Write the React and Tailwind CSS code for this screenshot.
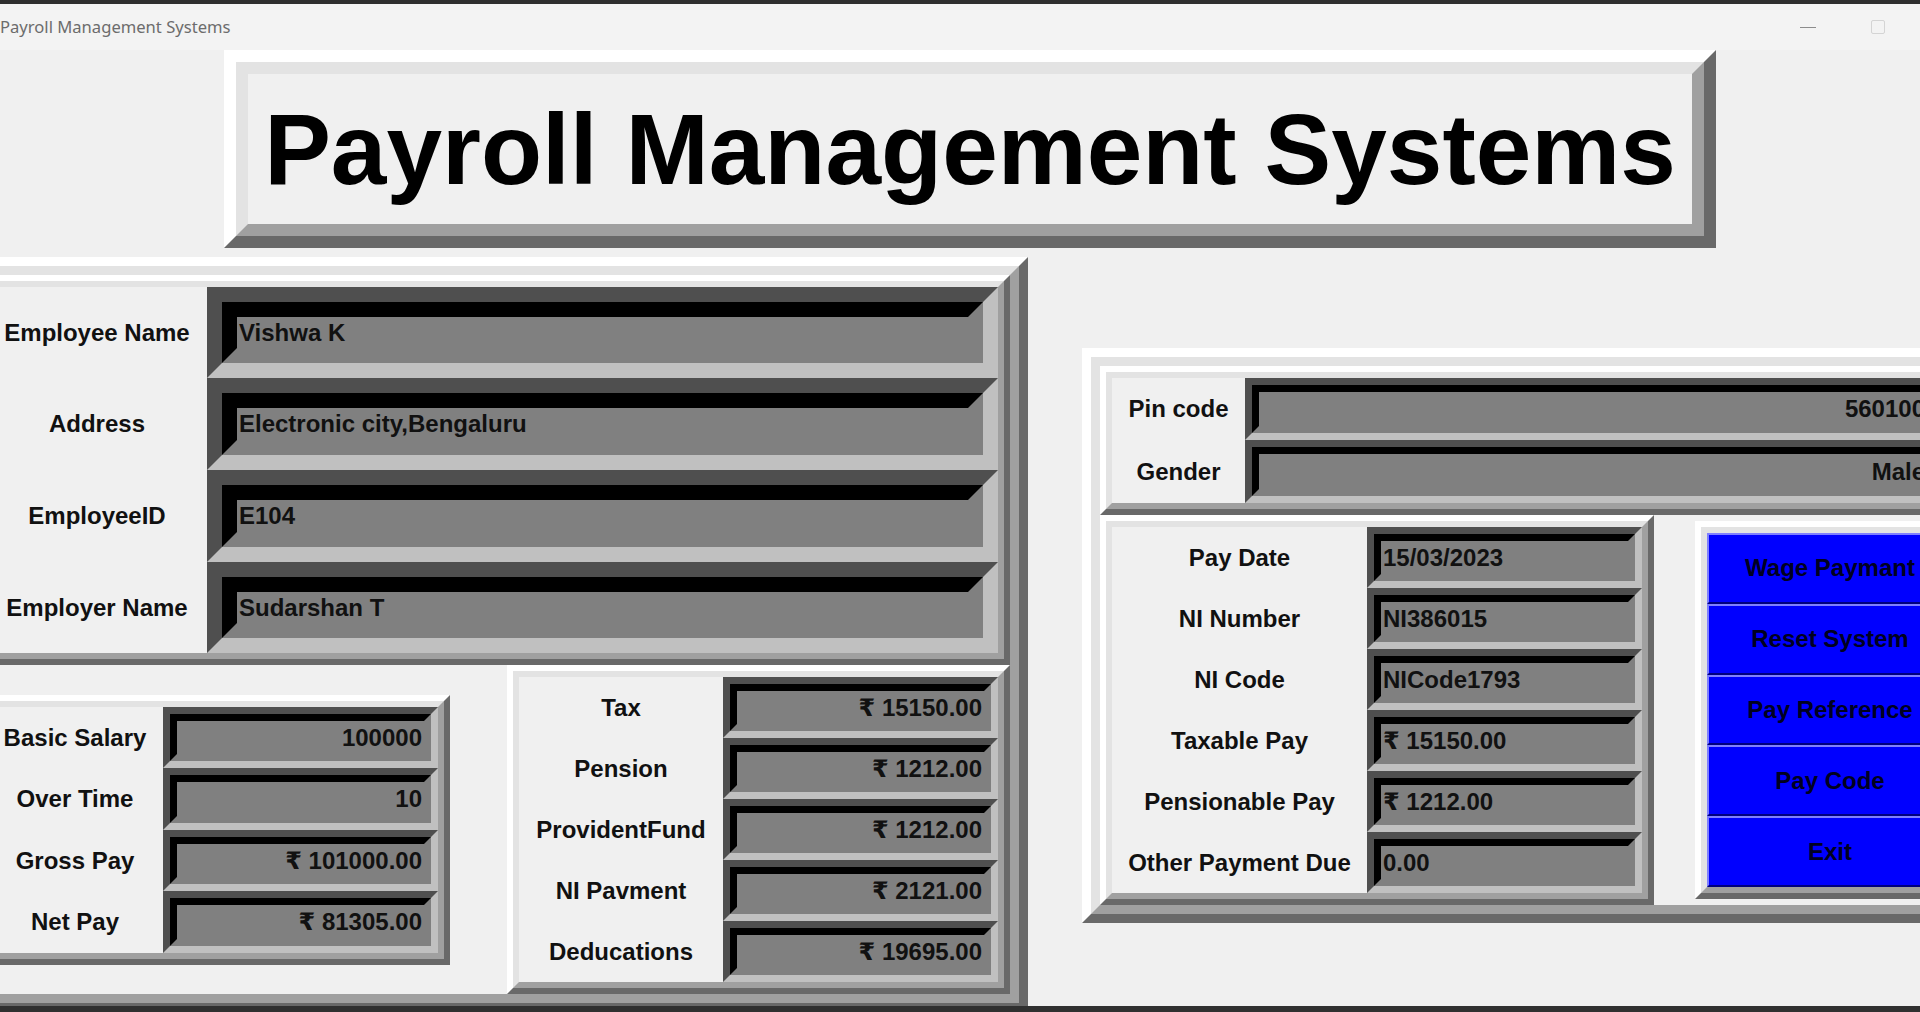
import React from 'react';

// Tk style raised frame: white / light on top-left, dark / gray on bottom-right
const Raised = ({ outer, inner, className = '', innerClassName = '', children }) => (
  <div className={`shrink-0 border-t-white border-l-white border-r-[#696969] border-b-[#696969] ${outer} ${className}`}>
    <div className={`h-full bg-[#f0f0f0] border-t-[#e3e3e3] border-l-[#e3e3e3] border-r-[#a0a0a0] border-b-[#a0a0a0] ${inner} ${innerClassName}`}>
      {children}
    </div>
  </div>
);

// Tk style sunken entry with grey background
const Entry = ({ value, band, align = 'left', className = '' }) => (
  <div className={`shrink-0 border-t-[#4f4f4f] border-l-[#4f4f4f] border-r-[#c0c0c0] border-b-[#c0c0c0] ${band} ${className}`}>
    <div
      className={`h-full flex items-center overflow-hidden bg-[#808080] border-t-black border-l-black border-r-[#808080] border-b-[#808080] ${band} ${
        align === 'right' ? 'justify-end' : 'justify-start'
      }`}
    >
      <span className="px-[2px] text-[24px] font-bold leading-none text-[#111] whitespace-nowrap">{value}</span>
    </div>
  </div>
);

const Label = ({ text, className = '' }) => (
  <div className={`shrink-0 flex items-center justify-center text-[24px] font-bold leading-none text-[#111] whitespace-nowrap ${className}`}>
    {text}
  </div>
);

const employeeRows = [
  { label: 'Employee Name', value: 'Vishwa K', h: 'h-[91px]' },
  { label: 'Address', value: 'Electronic city,Bengaluru', h: 'h-[92px]' },
  { label: 'EmployeeID', value: 'E104', h: 'h-[92px]' },
  { label: 'Employer Name', value: 'Sudarshan T', h: 'h-[91px]' },
];

const salaryRows = [
  { label: 'Basic Salary', value: '100000', h: 'h-[61px]' },
  { label: 'Over Time', value: '10', h: 'h-[62px]' },
  { label: 'Gross Pay', value: '₹ 101000.00', h: 'h-[61px]' },
  { label: 'Net Pay', value: '₹ 81305.00', h: 'h-[62px]' },
];

const deductionRows = [
  { label: 'Tax', value: '₹ 15150.00' },
  { label: 'Pension', value: '₹ 1212.00' },
  { label: 'ProvidentFund', value: '₹ 1212.00' },
  { label: 'NI Pavment', value: '₹ 2121.00' },
  { label: 'Deducations', value: '₹ 19695.00' },
];

const payRows = [
  { label: 'Pay Date', value: '15/03/2023' },
  { label: 'NI Number', value: 'NI386015' },
  { label: 'NI Code', value: 'NICode1793' },
  { label: 'Taxable Pay', value: '₹ 15150.00' },
  { label: 'Pensionable Pay', value: '₹ 1212.00' },
  { label: 'Other Payment Due', value: '0.00' },
];

const buttons = ['Wage Paymant', 'Reset System', 'Pay Reference', 'Pay Code', 'Exit'];

export default function App() {
  return (
    <div className="w-[1920px] h-[1012px] overflow-hidden flex flex-col bg-[#f0f0f0] font-['Liberation_Sans',Arial,'DejaVu_Sans',sans-serif]">
      {/* window chrome */}
      <div className="h-[4px] shrink-0 bg-[#2e2e2e]" />
      <div className="h-[46px] shrink-0 flex items-center bg-[#f3f3f3]">
        <span className="text-[16.6px] leading-none text-[#6c6c6c] font-['Noto_Sans','Open_Sans',sans-serif] whitespace-nowrap">
          Payroll Management Systems
        </span>
        <div className="ml-auto w-[16px] h-px bg-[#8c8c8c]" />
        <div className="ml-[55px] mr-[35px] w-[14px] h-[14px] rounded-[2px] border border-[#d4d4d4]" />
      </div>

      <div className="flex-1 overflow-hidden">
        {/* heading */}
        <Raised
          outer="border-[12px]"
          inner="border-[12px]"
          className="ml-[224px] w-[1492px] h-[198px]"
          innerClassName="flex items-center justify-center"
        >
          <h1 className="text-[100px] font-bold leading-none text-black whitespace-nowrap">Payroll Management Systems</h1>
        </Raised>

        <div className="flex items-start mt-[9px]">
          {/* left block */}
          <Raised outer="border-[9px]" inner="border-[9px]" className="-ml-[30px] w-[1058px] h-[755px]">
            <Raised outer="border-[6px]" inner="border-[6px]" className="w-[1022px] h-[390px]">
              {employeeRows.map((r) => (
                <div key={r.label} className={`flex ${r.h}`}>
                  <Label text={r.label} className="w-[207px] pr-[13px]" />
                  <Entry value={r.value} band="border-[15px]" className="w-[791px]" />
                </div>
              ))}
            </Raised>

            <div className="flex items-start">
              <Raised outer="border-[6px]" inner="border-[6px]" className="mt-[30px] w-[462px] h-[270px]">
                {salaryRows.map((r) => (
                  <div key={r.label} className={`flex ${r.h}`}>
                    <Label text={r.label} className="w-[163px] pr-[13px]" />
                    <Entry value={r.value} band="border-[7px]" align="right" className="w-[275px]" />
                  </div>
                ))}
              </Raised>

              <Raised outer="border-[6px]" inner="border-[6px]" className="ml-[57px] w-[503px] h-[329px]">
                {deductionRows.map((r) => (
                  <div key={r.label} className="flex h-[61px]">
                    <Label text={r.label} className="w-[204px]" />
                    <Entry value={r.value} band="border-[7px]" align="right" className="w-[275px]" />
                  </div>
                ))}
              </Raised>
            </div>
          </Raised>

          {/* right block */}
          <Raised outer="border-[9px]" inner="border-[9px]" className="ml-[54px] mt-[91px] w-[889px] h-[575px]">
            <Raised outer="border-[6px]" inner="border-[6px]" className="h-[149px]">
              <div className="flex h-[62px]">
                <Label text="Pin code" className="w-[133px]" />
                <Entry value="560100" band="border-[7px]" align="right" className="w-[696px]" />
              </div>
              <div className="flex h-[63px]">
                <Label text="Gender" className="w-[133px]" />
                <Entry value="Male" band="border-[7px]" align="right" className="w-[696px]" />
              </div>
            </Raised>

            <div className="flex items-center h-[390px]">
              <Raised outer="border-[6px]" inner="border-[6px]" className="w-[554px] h-[390px]">
                {payRows.map((r) => (
                  <div key={r.label} className="flex h-[61px]">
                    <Label text={r.label} className="w-[255px]" />
                    <Entry value={r.value} band="border-[7px]" className="w-[275px]" />
                  </div>
                ))}
              </Raised>

              <Raised
                outer="border-[6px]"
                inner="border-[6px]"
                className="ml-[41px] w-[270px] h-[378px]"
                innerClassName="flex flex-col"
              >
                {buttons.map((b) => (
                  <button
                    key={b}
                    className="flex-1 w-[246px] flex items-center justify-center bg-[#0000ff] border-2 border-t-[#7f7fff] border-l-[#7f7fff] border-r-[#00007f] border-b-[#00007f] text-[24px] font-bold leading-none text-[#000020] whitespace-nowrap"
                  >
                    {b}
                  </button>
                ))}
              </Raised>
            </div>
          </Raised>
        </div>
      </div>

      <div className="h-[6px] shrink-0 bg-[#303030]" />
    </div>
  );
}
